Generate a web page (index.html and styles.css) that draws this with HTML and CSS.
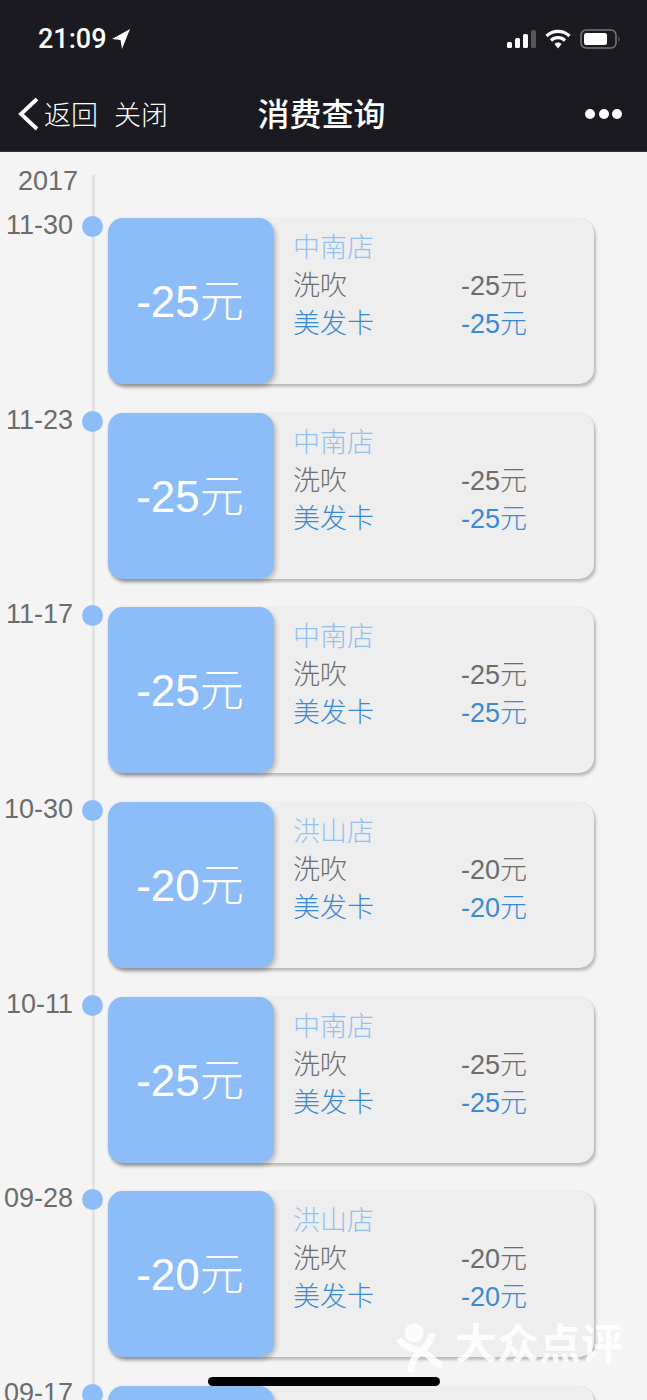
FILE: index.html
```html
<!DOCTYPE html>
<html lang="zh-CN">
<head>
    <meta charset="UTF-8">
    <meta name="viewport" content="width=device-width, initial-scale=1.0">
    <title>消费查询</title>
    <link rel="stylesheet" href="styles.css">
</head>
<body>
    <header class="top">
        <div class="status">
            <div class="clock">
                <span>21:09</span>
                <svg class="arrow" width="20" height="22" viewBox="0 0 20 22"><path d="M19 1 L1 11 L9.500 12 L11 21 Z" fill="#fff"/></svg>
            </div>
            <div class="status-icons">
                <svg width="29" height="18" viewBox="0 0 29 18">
                    <rect x="0" y="12" width="5" height="6" rx="1.500" fill="#fff"/>
                    <rect x="8" y="8" width="5" height="10" rx="1.500" fill="#fff"/>
                    <rect x="16" y="4" width="5" height="14" rx="1.500" fill="#fff"/>
                    <rect x="24" y="0" width="5" height="18" rx="1.500" fill="#55555a"/>
                </svg>
                <svg width="26" height="20" viewBox="0 0 26 20">
                    <path d="M1.500 7 A16.500 16.500 0 0 1 24.500 7" fill="none" stroke="#fff" stroke-width="3.200"/>
                    <path d="M6 11.500 A10 10 0 0 1 20 11.500" fill="none" stroke="#fff" stroke-width="3.200"/>
                    <path d="M9.500 15 L13 19.500 L16.500 15 A5 5 0 0 0 9.500 15 Z" fill="#fff"/>
                </svg>
                <svg width="41" height="20" viewBox="0 0 41 20">
                    <rect x="1" y="1" width="35" height="18" rx="5" fill="none" stroke="#77777c" stroke-width="1.500"/>
                    <rect x="4" y="4" width="23" height="12" rx="2.500" fill="#fff"/>
                    <path d="M38.500 7 Q40.500 10 38.500 13 Z" fill="#77777c"/>
                </svg>
            </div>
        </div>
        <nav class="nav">
            <div class="nav-left">
                <svg class="back" width="22" height="34" viewBox="0 0 22 34"><path d="M20 2 L4 17 L20 32" fill="none" stroke="#fff" stroke-width="3.800"/></svg>
                <span class="nav-link">返回</span>
                <span class="nav-link nav-close">关闭</span>
            </div>
            <h1 class="nav-title">消费查询</h1>
            <div class="nav-right">
                <div class="nav-more"><i></i><i></i><i></i></div>
            </div>
        </nav>
    </header>

    <main class="timeline">
        <div class="year-row">
            <div class="year">2017</div>
            <div class="track"></div>
        </div>

        <div class="row">
            <div class="date">11-30</div>
            <div class="track">
                <span class="dot"></span>
                <div class="card">
                    <div class="tile">-25元</div>
                    <div class="info">
                        <div class="shop">中南店</div>
                        <div class="line"><span>洗吹</span><span>-25元</span></div>
                        <div class="line pay"><span>美发卡</span><span>-25元</span></div>
                    </div>
                </div>
            </div>
        </div>

        <div class="row">
            <div class="date">11-23</div>
            <div class="track">
                <span class="dot"></span>
                <div class="card">
                    <div class="tile">-25元</div>
                    <div class="info">
                        <div class="shop">中南店</div>
                        <div class="line"><span>洗吹</span><span>-25元</span></div>
                        <div class="line pay"><span>美发卡</span><span>-25元</span></div>
                    </div>
                </div>
            </div>
        </div>

        <div class="row">
            <div class="date">11-17</div>
            <div class="track">
                <span class="dot"></span>
                <div class="card">
                    <div class="tile">-25元</div>
                    <div class="info">
                        <div class="shop">中南店</div>
                        <div class="line"><span>洗吹</span><span>-25元</span></div>
                        <div class="line pay"><span>美发卡</span><span>-25元</span></div>
                    </div>
                </div>
            </div>
        </div>

        <div class="row">
            <div class="date">10-30</div>
            <div class="track">
                <span class="dot"></span>
                <div class="card">
                    <div class="tile">-20元</div>
                    <div class="info">
                        <div class="shop">洪山店</div>
                        <div class="line"><span>洗吹</span><span>-20元</span></div>
                        <div class="line pay"><span>美发卡</span><span>-20元</span></div>
                    </div>
                </div>
            </div>
        </div>

        <div class="row">
            <div class="date">10-11</div>
            <div class="track">
                <span class="dot"></span>
                <div class="card">
                    <div class="tile">-25元</div>
                    <div class="info">
                        <div class="shop">中南店</div>
                        <div class="line"><span>洗吹</span><span>-25元</span></div>
                        <div class="line pay"><span>美发卡</span><span>-25元</span></div>
                    </div>
                </div>
            </div>
        </div>

        <div class="row">
            <div class="date">09-28</div>
            <div class="track">
                <span class="dot"></span>
                <div class="card">
                    <div class="tile">-20元</div>
                    <div class="info">
                        <div class="shop">洪山店</div>
                        <div class="line"><span>洗吹</span><span>-20元</span></div>
                        <div class="line pay"><span>美发卡</span><span>-20元</span></div>
                    </div>
                </div>
            </div>
        </div>

        <div class="row">
            <div class="date">09-17</div>
            <div class="track">
                <span class="dot"></span>
                <div class="card">
                    <div class="tile"></div>
                </div>
            </div>
        </div>
    </main>

    <div class="watermark">
        <svg width="50" height="50" viewBox="0 0 50 50">
            <circle cx="18" cy="10" r="7.500" fill="#fff" fill-opacity="0.85" stroke="#fff" stroke-width="4"/>
            <path d="M3 16 C9 27 25 26 33 33 C37 37 41 41 46 42" fill="none" stroke="#fff" stroke-width="7"/>
            <path d="M36 10 C35 22 25 27 20 33 C17 37 15 42 15 49" fill="none" stroke="#fff" stroke-width="7"/>
        </svg>
        <span class="watermark-text">大众点评</span>
    </div>
    <div class="home-bar"></div>
</body>
</html>
```

FILE: styles.css
```css
html, body {
    margin: 0;
    height: 1400px;
    overflow: hidden;
}
body {
    position: relative;
    background-color: #f4f4f4;
    font-family: "Liberation Sans", "Noto Sans CJK SC", sans-serif;
    font-weight: 300;
    color: #6c6c6c;
}

/* header */
.top {
    height: 151px;
    background-color: #1a1a20;
    border-bottom: 1px solid #33333a;
    color: #fff;
}
.status {
    height: 78px;
    display: flex;
    justify-content: space-between;
    align-items: center;
    padding: 0 26px 0 38px;
}
.clock {
    display: flex;
    align-items: center;
    gap: 4px;
    font-family: Roboto, sans-serif;
    font-size: 27px;
    font-weight: 500;
}
.status-icons {
    display: flex;
    align-items: center;
    gap: 9px;
}
.nav {
    height: 70px;
    display: grid;
    grid-template-columns: 1fr auto 1fr;
    align-items: center;
    padding: 0 25px 0 17px;
}
.nav-left {
    display: flex;
    align-items: center;
}
.nav-link {
    font-size: 27px;
    white-space: nowrap;
}
.nav-close {
    margin-left: 16px;
}
.back {
    margin: 2px 5px 0 0;
}
.nav-title {
    margin: 0;
    padding: 0 0 2px 4px;
    font-size: 32px;
    font-weight: 500;
}
.nav-right {
    display: flex;
    justify-content: flex-end;
    padding-top: 2px;
}
.nav-more {
    width: 37px;
    display: flex;
    justify-content: space-between;
}
.nav-more i {
    width: 10px;
    height: 10px;
    border-radius: 50%;
    background-color: #fff;
}

/* timeline */
.timeline {
    padding-top: 23px;
}
.year-row,
.row {
    display: flex;
}
.year-row {
    height: 43px;
}
.row {
    height: 194.7px;
}
.year {
    width: 78px;
    margin-right: 14px;
    text-align: right;
    font-size: 27px;
    line-height: 12px;
}
.date {
    width: 73px;
    margin-right: 19px;
    text-align: right;
    font-size: 27px;
    line-height: 14px;
}
.track {
    position: relative;
    flex: 1;
    border-left: 3px solid #e2e2e2;
    padding-left: 13px;
}
.dot {
    position: absolute;
    left: -13.500px;
    top: -2px;
    width: 21px;
    height: 21px;
    border-radius: 50%;
    background-color: #8cbdf9;
}
.card {
    width: 486px;
    height: 166px;
    display: flex;
    background-color: #eee;
    border-radius: 15px;
    box-shadow: 0 0 2px rgba(0, 0, 0, 0.1), 2px 3px 3px rgba(0, 0, 0, 0.22);
}
.tile {
    width: 166px;
    height: 166px;
    flex-shrink: 0;
    box-sizing: border-box;
    padding: 0 2px 6px 0;
    display: flex;
    align-items: center;
    justify-content: center;
    background-color: #8cbdf9;
    border-radius: 15px;
    box-shadow: 2px 3px 4px rgba(0, 0, 0, 0.22);
    color: #fff;
    font-size: 44px;
}
.info {
    padding: 12px 0 0 19px;
    font-size: 27px;
    line-height: 38px;
}
.shop {
    color: #94c0f0;
    line-height: 37px;
}
.line {
    display: grid;
    grid-template-columns: 168px auto;
}
.pay {
    color: #3a8ad4;
}

/* overlays */
.watermark {
    position: absolute;
    left: 396px;
    top: 1323px;
    display: flex;
    align-items: flex-start;
    gap: 9px;
    opacity: 0.85;
    color: #fff;
    white-space: nowrap;
}
.watermark-text {
    font-size: 42px;
    font-weight: 700;
    line-height: 42px;
    margin-top: 1px;
}
.home-bar {
    position: absolute;
    left: 208px;
    top: 1377px;
    width: 232px;
    height: 9px;
    border-radius: 5px;
    background-color: #000;
}
```
